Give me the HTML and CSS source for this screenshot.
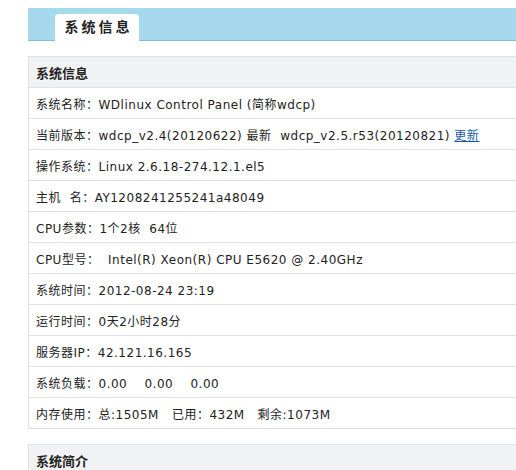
FILE: index.html
```html
<!DOCTYPE html>
<html>
<head>
<meta charset="utf-8">
<title>系统信息</title>
<link rel="stylesheet" href="styles.css">
</head>
<body>
<div class="main">
	<div class="tabbar">
		<div class="tab">系统信息</div>
	</div>
	<table class="info">
		<tr><th>系统信息</th></tr>
		<tr><td>系统名称：WDlinux Control Panel (简称wdcp)</td></tr>
		<tr><td>当前版本：wdcp_v2.4(20120622) 最新&nbsp; wdcp_v2.5.r53(20120821) <a href="#">更新</a></td></tr>
		<tr><td>操作系统：Linux 2.6.18-274.12.1.el5</td></tr>
		<tr><td>主机&nbsp; 名：AY1208241255241a48049</td></tr>
		<tr><td>CPU参数：1个2核&nbsp; 64位</td></tr>
		<tr><td>CPU型号：&nbsp; Intel(R) Xeon(R) CPU E5620 @ 2.40GHz</td></tr>
		<tr><td>系统时间：2012-08-24 23:19</td></tr>
		<tr><td>运行时间：0天2小时28分</td></tr>
		<tr><td>服务器IP：42.121.16.165</td></tr>
		<tr><td>系统负载：0.00&nbsp;&nbsp;&nbsp; 0.00&nbsp;&nbsp;&nbsp; 0.00</td></tr>
		<tr><td>内存使用：总:1505M&nbsp;&nbsp; 已用：432M&nbsp;&nbsp; 剩余:1073M</td></tr>
	</table>
	<table class="info">
		<tr><th>系统简介</th></tr>
	</table>
</div>
</body>
</html>
```

FILE: styles.css
```css
* {
	margin: 0;
	padding: 0;
}

html, body {
	overflow: hidden;
}

body {
	margin: 8px 0 0 28px;
	font-family: "DejaVu Sans", "Noto Sans CJK SC", sans-serif;
	font-size: 12px;
	color: #222;
	background: #fff;
}

.main {
	width: 600px;
}

.tabbar {
	height: 32px;
	background: #a6d8ee;
	border-bottom: 1px solid #86bcd8;
	padding-left: 27px;
	display: flex;
	align-items: flex-end;
}

.tab {
	width: 84px;
	height: 27px;
	line-height: 27px;
	background: #fff;
	border-radius: 4px 4px 0 0;
	text-align: center;
	font-size: 14px;
	font-weight: bold;
	letter-spacing: 3px;
	text-indent: 3px;
	color: #222;
	margin-bottom: -1px;
}

.info {
	width: 100%;
	border-collapse: collapse;
	border: 1px solid #e2e2e2;
	margin-top: 15px;
}

.info th {
	height: 30px;
	background: #f1f2f4;
	text-align: left;
	font-size: 13px;
	padding-left: 7px;
	border-bottom: 1px solid #e2e2e2;
}

.info td {
	height: 30px;
	padding-left: 7px;
	border-bottom: 1px solid #e2e2e2;
	white-space: nowrap;
	letter-spacing: 0.5px;
}

.info a {
	color: #1a5aa8;
}
```
